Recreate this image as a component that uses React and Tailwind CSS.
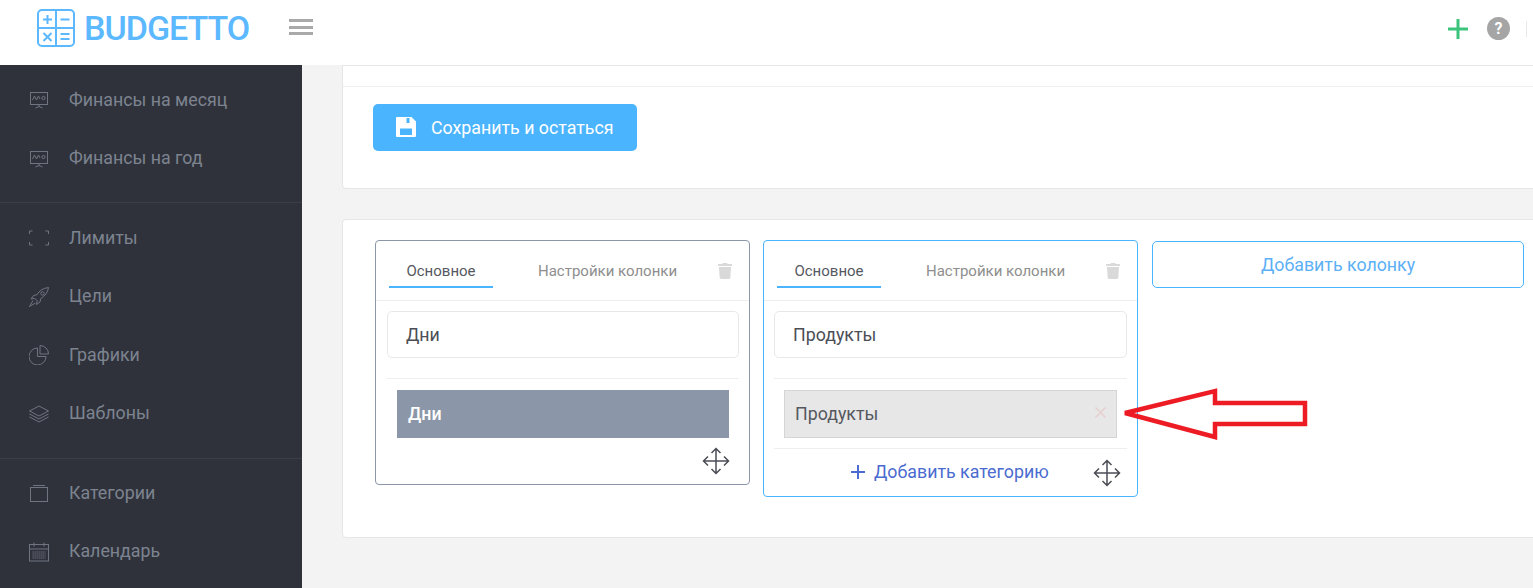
import React from 'react';
import { FaTrash } from 'react-icons/fa';

const Icon = ({ children }) => (
    <svg width="20" height="20" viewBox="0 0 20 20" fill="none" stroke="#6f7580" strokeWidth="1" className="shrink-0">
        {children}
    </svg>
);

const BoardIcon = () => (
    <Icon>
        <rect x="1.5" y="2.5" width="17" height="12" />
        <path d="M3.5 10l2-4 2 4 2-4 1.5 3" />
        <circle cx="14.5" cy="8" r="1.6" />
        <path d="M10 14.5v2M6.5 18l3.5-1.5 3.5 1.5" />
    </Icon>
);

const LimitIcon = () => (
    <Icon>
        <path d="M.5 3.500v-3h3M16.500 .5h3v3M19.500 11.500v3h-3M3.500 14.500h-3v-3" transform="translate(0 2.500)" />
    </Icon>
);

const RocketIcon = () => (
    <Icon>
        <path d="M19.500 .5c-5.500 .8-9 3-11.500 7.200l-3.500 .8-2.500 3.500 3.700-.7 2.500 2.500-.7 3.700 3.500-2.500 .8-3.500c4.200-2.500 7-6 7.700-11z" />
        <circle cx="13.500" cy="6.500" r="1.700" />
        <path d="M4 13.500l-3.500 6 6-3.500" />
    </Icon>
);

const PieIcon = () => (
    <Icon>
        <path d="M8.500 3a8.500 8.500 0 1 0 8.500 8.500H8.500z" />
        <path d="M11 .5a8.500 8.500 0 0 1 8.500 8.500H11z" />
    </Icon>
);

const LayersIcon = () => (
    <Icon>
        <path d="M10 2l9.500 5-9.500 5-9.500-5z" />
        <path d="M.5 10l9.500 5 9.500-5M.5 13l9.500 5 9.500-5" />
    </Icon>
);

const CategoryIcon = () => (
    <Icon>
        <rect x="1.500" y="4.500" width="17" height="14" />
        <path d="M4 2.500h12" />
    </Icon>
);

const CalendarIcon = () => (
    <Icon>
        <rect x=".5" y="2.500" width="19" height="16.500" />
        <path d="M.5 7h19M5 .5v4M15 .5v4" />
        <path d="M3.500 10h13M3.500 12h13M3.500 14h13M3.500 16h13" strokeDasharray="1.300 .7" strokeWidth="1.200" />
    </Icon>
);

const MoveIcon = () => (
    <svg width="28" height="28" viewBox="0 0 28 28" fill="none" stroke="#4a4d55" strokeWidth="1.500">
        <path d="M14 1.500v25M1.500 14h25M9.500 6L14 1.500 18.500 6M9.500 22l4.500 4.500 4.500-4.500M6 9.500L1.500 14 6 18.500M22 9.500l4.500 4.500-4.500 4.500" />
    </svg>
);

const SaveIcon = () => (
    <svg width="20" height="20" viewBox="0 0 20 20" className="-mt-[1px] shrink-0">
        <path
            fill="#fff"
            fillRule="evenodd"
            d="M1 0h14.500L20 4.500V19a1 1 0 0 1-1 1H1a1 1 0 0 1-1-1V1a1 1 0 0 1 1-1zM10.500 1v5h3V1zM4 11.500V18h12v-6.500z"
        />
    </svg>
);

const Logo = () => (
    <svg width="38" height="38" viewBox="0 0 38 38" fill="none" stroke="#5cb8ff" strokeWidth="2">
        <rect x="1" y="1" width="36" height="36" rx="4" />
        <path d="M19 1v36M1 19h36" />
        <path d="M6 10.500h9M10.500 6v9M23.500 10.500h9M6.500 24l8 8M14.500 24l-8 8M23.500 25h9M23.500 30h9" />
    </svg>
);

const navGroups = [
    {
        className: 'pb-[14px]',
        items: [
            { label: 'Финансы на месяц', icon: BoardIcon },
            { label: 'Финансы на год', icon: BoardIcon },
        ],
    },
    {
        className: 'border-t border-[#3b3e47] pb-[15px] pt-[6px]',
        items: [
            { label: 'Лимиты', icon: LimitIcon },
            { label: 'Цели', icon: RocketIcon },
            { label: 'Графики', icon: PieIcon },
            { label: 'Шаблоны', icon: LayersIcon },
        ],
    },
    {
        className: 'border-t border-[#3b3e47] pt-[5px]',
        items: [
            { label: 'Категории', icon: CategoryIcon },
            { label: 'Календарь', icon: CalendarIcon },
        ],
    },
];

const Column = ({ title, active, children }) => (
    <div className={`w-[375px] shrink-0 rounded-[4px] border bg-white ${active ? 'border-[#4bb4ff]' : 'border-[#8b96a8]'}`}>
        <div className="flex h-[60px] items-start border-b border-[#eeeeee] pl-[13px]">
            <div className="mt-[19px] flex h-[28px] w-[104px] justify-center border-b-[2px] border-[#4bb4ff] text-[15px] leading-[22px] text-[#55585f]">
                Основное
            </div>
            <div className="ml-[45px] mt-[19px] w-[179px] text-[15px] leading-[22px] text-[#8e8e8e]">Настройки колонки</div>
            <FaTrash className="mt-[22px] text-[16px] text-[#d9d9d9]" />
        </div>
        <div className={`pr-[10px] pt-[10px] ${active ? 'pl-[10px]' : 'pl-[11px]'}`}>
            <div className="flex h-[47px] items-center rounded-[5px] border border-[#e8e8e8] pl-[18px] pt-[2px] text-[17.800px] text-[#4b4e55]">
                {title}
            </div>
            <div className="mt-[20px] border-t border-[#eeeeee] px-[10px] pt-[11px]">{children}</div>
        </div>
    </div>
);

const App = () => {
    return (
        <div className="relative flex h-[588px] w-[1533px] flex-col overflow-hidden bg-[#f3f3f3] font-['Roboto',sans-serif]">
            {/* Header */}
            <header className="flex h-[65px] shrink-0 items-start bg-white">
                <div className="ml-[37px] mt-[9px] flex items-center">
                    <Logo />
                    <span className="ml-[9px] w-[165px] whitespace-nowrap text-[34px] font-medium leading-[38px] tracking-[-1px] text-[#5cb8ff]">
                        BUDGETTO
                    </span>
                </div>
                <div className="ml-[40px] mt-[19px] flex h-[16px] w-[24px] flex-col justify-between">
                    <span className="h-[3px] bg-[#a9a9a9]" />
                    <span className="h-[3px] bg-[#a9a9a9]" />
                    <span className="h-[3px] bg-[#a9a9a9]" />
                </div>
                <div className="ml-auto mt-[17px] flex items-center">
                    <svg width="22" height="22" viewBox="0 0 22 22" stroke="#3cc47c" strokeWidth="3">
                        <path d="M11 1v20M1 11h20" />
                    </svg>
                    <span className="ml-[18px] flex h-[23px] w-[23px] items-center justify-center rounded-full bg-[#a5a5a5] text-[16px] font-bold text-white">
                        ?
                    </span>
                    <span className="ml-[16px] h-[16px] w-px bg-[#e8e8e8]" />
                    <span className="w-[6px]" />
                </div>
            </header>

            <div className="flex min-h-0 flex-1">
                {/* Sidebar */}
                <aside className="w-[302px] shrink-0 bg-[#2f323b] pt-[6px]">
                    {navGroups.map((group, index) => (
                        <div key={index} className={group.className}>
                            {group.items.map((item) => (
                                <div key={item.label} className="flex h-[58.500px] items-center gap-[20px] pl-[29px] text-[17.800px] text-[#7d8490]">
                                    <item.icon />
                                    <span>{item.label}</span>
                                </div>
                            ))}
                        </div>
                    ))}
                </aside>

                {/* Content */}
                <main className="flex w-[1300px] shrink-0 flex-col pl-[40px]">
                    <section className="h-[124px] w-[1300px] rounded-b-[4px] border border-[#e6e6e6] bg-white">
                        <div className="h-[21px] border-b border-[#eeeeee]" />
                        <button className="ml-[30px] mt-[17px] flex h-[47px] w-[264px] items-center gap-[15px] rounded-[5px] bg-[#4bb4ff] pl-[23px] text-[17.800px] text-white">
                            <SaveIcon />
                            <span className="mt-[2px]">Сохранить и остаться</span>
                        </button>
                    </section>

                    <section className="mt-[30px] flex h-[319px] w-[1300px] items-start gap-[13px] rounded-[4px] border border-[#e6e6e6] bg-white pl-[32px] pt-[20px]">
                        <Column title="Дни">
                            <div className="flex h-[48px] items-center bg-[#8b96a8] pl-[11px] text-[17.800px] font-medium text-white">Дни</div>
                            <div className="flex h-[46px] items-center justify-end">
                                <span className="-mr-[1px] -mt-[1px] block">
                                    <MoveIcon />
                                </span>
                            </div>
                        </Column>
                        <Column title="Продукты" active>
                            <div className="flex h-[48px] items-center justify-between border border-[#d5d5d5] bg-[#e6e7e6] pl-[10px] pr-[10px] text-[17.800px] text-[#55585f]">
                                Продукты
                                <svg width="11" height="11" viewBox="0 0 11 11" stroke="#e6cfcf" strokeWidth="1.500" className="-mt-[3px]">
                                    <path d="M.5.5l10 10M10.500.5l-10 10" />
                                </svg>
                            </div>
                            <div className="-mx-[10px] mt-[10px] flex h-[48px] items-center border-t border-[#eeeeee]">
                                <svg width="14" height="14" viewBox="0 0 14 14" stroke="#4a6bd0" strokeWidth="2" className="ml-[77px] -mt-[1px]">
                                    <path d="M7 0v14M0 7h14" />
                                </svg>
                                <span className="ml-[9px] text-[17.800px] text-[#4a6bd0]">Добавить категорию</span>
                                <span className="ml-auto mr-[6px] block">
                                    <MoveIcon />
                                </span>
                            </div>
                        </Column>
                        <button className="ml-px mt-px flex h-[47px] w-[372px] shrink-0 items-center justify-center rounded-[5px] border border-[#4bb4ff] pt-[2px] text-[17.800px] text-[#5cb0f5]">
                            Добавить колонку
                        </button>
                    </section>
                </main>
            </div>

            {/* Red annotation arrow */}
            <svg className="absolute left-[1118px] top-[385px]" width="194" height="58" viewBox="0 0 194 58" fill="none">
                <path d="M7 28L97 6v12h90v21H97v13z" stroke="#ed1c24" strokeWidth="4.500" strokeLinejoin="miter" />
            </svg>
        </div>
    );
};

export default App;
